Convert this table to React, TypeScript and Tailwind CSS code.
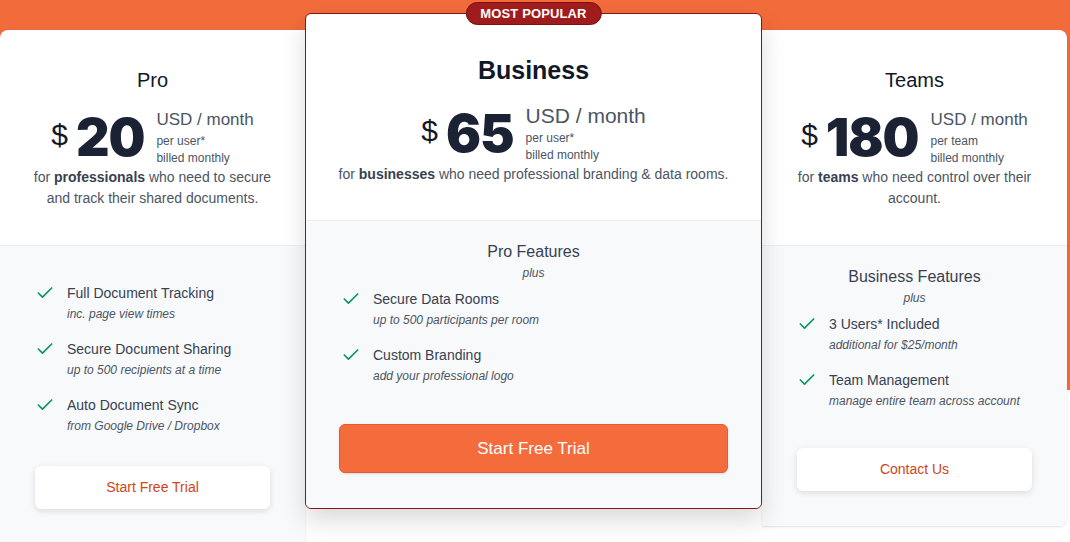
import { Check } from 'lucide-react'

type Feature = { title: string; note: string }

const proFeatures: Feature[] = [
  { title: 'Full Document Tracking', note: 'inc. page view times' },
  { title: 'Secure Document Sharing', note: 'up to 500 recipients at a time' },
  { title: 'Auto Document Sync', note: 'from Google Drive / Dropbox' },
]

const businessFeatures: Feature[] = [
  { title: 'Secure Data Rooms', note: 'up to 500 participants per room' },
  { title: 'Custom Branding', note: 'add your professional logo' },
]

const teamsFeatures: Feature[] = [
  { title: '3 Users* Included', note: 'additional for $25/month' },
  { title: 'Team Management', note: 'manage entire team across account' },
]

function FeatureList({ items }: { items: Feature[] }) {
  return (
    <ul className="flex flex-col gap-4 pl-[35px]">
      {items.map((f) => (
        <li key={f.title} className="flex items-start gap-3">
          <Check size={20} strokeWidth={2} className="shrink-0 text-[#0b9468]" />
          <div>
            <p className="text-[14px] leading-5 text-[#374151]">{f.title}</p>
            <p className="mt-[2px] text-[12px] italic leading-[18px] text-[#4b5563]">{f.note}</p>
          </div>
        </li>
      ))}
    </ul>
  )
}

function Price({ amount, per, big }: { amount: string; per: string; big?: boolean }) {
  return (
    <div className="flex items-start justify-center">
      <span className={`text-[30px] leading-none text-[#111827] ${big ? 'mt-[12px]' : 'mt-[10px]'}`}>$</span>
      <span
        className={`ml-[8px] font-['Inter',sans-serif] text-[52px] font-black leading-none tracking-[-0.02em] text-[#1a2234] ${big ? 'mt-[4px]' : 'mt-[2px]'}`}
      >
        {amount}
      </span>
      <div className="ml-[12px] text-left text-[#4b5563]">
        <p className={big ? 'text-[21px] leading-[24px]' : 'text-[17px] leading-5'}>USD / month</p>
        <p className={`text-[12px] leading-[17px] ${big ? 'mt-[2px]' : 'mt-[3px]'}`}>{per}</p>
        <p className="text-[12px] leading-[17px]">billed monthly</p>
      </div>
    </div>
  )
}

function SideCard({
  name,
  amount,
  per,
  description,
  header,
  features,
  cta,
  rounded,
}: {
  name: string
  amount: string
  per: string
  description: React.ReactNode
  header?: string
  features: Feature[]
  cta: string
  rounded: string
}) {
  return (
    <div className={`mt-[17px] w-[305px] shrink-0 overflow-hidden bg-white shadow-sm ${rounded}`}>
      <div className="border-b border-[#eceef1] px-[28px] pb-[36px] pt-[36px] text-center">
        <h3 className="text-[20px] leading-7 text-[#111827]">{name}</h3>
        <div className="mt-4">
          <Price amount={amount} per={per} />
        </div>
        <p className="text-[14px] leading-[21px] text-[#4b5563]">{description}</p>
      </div>
      <div className={`bg-[#f8f9fb] pb-[35px] ${header ? 'pt-[21px]' : 'pt-[37px]'}`}>
        {header && (
          <div className="mb-2 text-center">
            <p className="text-[16px] leading-5 text-[#374151]">{header}</p>
            <p className="mt-[3px] text-[12px] italic leading-4 text-[#4b5563]">plus</p>
          </div>
        )}
        <FeatureList items={features} />
        <div className={`px-[35px] ${header ? 'mt-[38px]' : 'mt-[31px]'}`}>
          <button className="h-[43px] w-full rounded-md bg-white text-[14px] text-[#cf4519] shadow-[0_2px_6px_rgba(0,0,0,0.12)]">
            {cta}
          </button>
        </div>
      </div>
    </div>
  )
}

function BusinessCard() {
  return (
    <div className="relative z-10 w-[457px] shrink-0 rounded-md border-[1.5px] border-[#8a1414] bg-white shadow-[0_12px_24px_rgba(0,0,0,0.14)]">
      <span className="absolute left-1/2 top-[-12px] -translate-x-1/2 whitespace-nowrap rounded-full border border-[#7a1010] bg-[#a01c1c] px-[14px] text-[13px] font-bold leading-[21px] tracking-[0.01em] text-white">
        MOST POPULAR
      </span>
      <div className="rounded-t-md border-b border-[#eceef1] pb-[35px] pt-[40px] text-center">
        <h3 className="text-[25px] font-bold leading-8 text-[#111827]">Business</h3>
        <div className="mt-[18px]">
          <Price amount="65" per="per user*" big />
        </div>
        <p className="text-[14px] leading-[21px] text-[#4b5563]">
          for <b className="text-[#374151]">businesses</b> who need professional branding &amp; data rooms.
        </p>
      </div>
      <div className="rounded-b-md bg-[#f8f9fb] pb-[35px] pt-[21px]">
        <div className="mb-2 text-center">
          <p className="text-[16px] leading-5 text-[#374151]">Pro Features</p>
          <p className="mt-[3px] text-[12px] italic leading-4 text-[#4b5563]">plus</p>
        </div>
        <FeatureList items={businessFeatures} />
        <div className="mt-[39px] px-[33px]">
          <button className="h-[49px] w-full rounded-md border border-[#e85c2c] bg-[#f46b3c] text-[17px] text-white shadow-sm">
            Start Free Trial
          </button>
        </div>
      </div>
    </div>
  )
}

export default function App() {
  return (
    <div className="min-h-[542px] w-full bg-[linear-gradient(to_bottom,#f26b3b_0px,#f26b3b_390px,#ffffff_390px)] font-['Liberation_Sans',Arial,sans-serif]">
      <div className="flex items-start pt-[13px]">
        <SideCard
          name="Pro"
          amount="20"
          per="per user*"
          description={
            <>
              for <b className="text-[#374151]">professionals</b> who need to secure and track their shared documents.
            </>
          }
          features={proFeatures}
          cta="Start Free Trial"
          rounded="rounded-tl-lg"
        />
        <BusinessCard />
        <SideCard
          name="Teams"
          amount="180"
          per="per team"
          description={
            <>
              for <b className="text-[#374151]">teams</b> who need control over their account.
            </>
          }
          header="Business Features"
          features={teamsFeatures}
          cta="Contact Us"
          rounded="rounded-tr-lg rounded-br-lg"
        />
      </div>
    </div>
  )
}
